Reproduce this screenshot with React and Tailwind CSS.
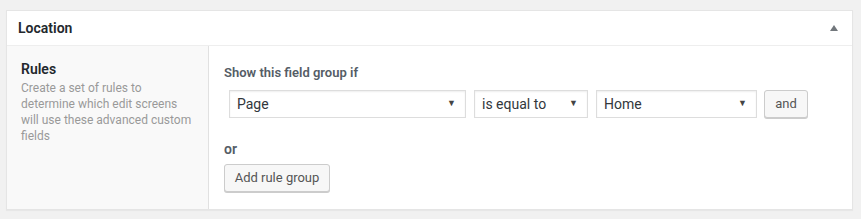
import React from 'react';

function FakeSelect({ value, width }) {
  return (
    <div
      className={`flex h-[28px] items-center justify-between border border-[#dddddd] bg-white pl-[7px] pr-[9px] text-[14px] text-[#32373c] shadow-[inset_0_1px_2px_rgba(0,0,0,0.07)] ${width}`}
    >
      <span>{value}</span>
      <span className="text-[9px] text-[#444]">▼</span>
    </div>
  );
}

function Button({ children, className = '' }) {
  return (
    <button
      className={`flex h-[28px] items-center justify-center rounded-[3px] border border-[#cccccc] bg-[#f7f7f7] text-[13px] text-[#555555] shadow-[0_1px_0_#cccccc] ${className}`}
    >
      {children}
    </button>
  );
}

export default function App() {
  return (
    <div className="h-[219px] w-[861px] bg-[#f1f1f1] pl-[6px] pt-[10px] font-['Roboto',sans-serif]">
      <div className="w-[847px] border border-[#e5e5e5] bg-white shadow-[0_1px_1px_rgba(0,0,0,0.04)]">
        <div className="flex h-[35px] items-center justify-between border-b border-[#eeeeee] pl-[11px] pr-[14px]">
          <h2 className="text-[14px] font-semibold text-[#23282d]">Location</h2>
          <svg width="8" height="6" viewBox="0 0 8 6">
            <path d="M4 0 L8 6 L0 6 Z" fill="#72777c" />
          </svg>
        </div>
        <div className="flex h-[163px]">
          <div className="w-[202px] border-r border-[#e1e1e1] bg-[#f9f9f9] pl-[14px] pr-[14px] pt-[13px]">
            <p className="text-[14px] font-semibold leading-[20px] text-[#23282d]">Rules</p>
            <p className="mt-[1px] text-[12px] leading-[16px] text-[#999999]">
              Create a set of rules to determine which edit screens will use these advanced custom fields
            </p>
          </div>
          <div className="flex-1 pl-[15px] pt-[17px]">
            <p className="text-[13px] font-semibold leading-[20px] text-[#555d66]">Show this field group if</p>
            <div className="mt-[7px] flex items-center pl-[5px]">
              <FakeSelect value="Page" width="w-[237px]" />
              <div className="w-[8px]" />
              <FakeSelect value="is equal to" width="w-[114px]" />
              <div className="w-[8px]" />
              <FakeSelect value="Home" width="w-[161px]" />
              <div className="w-[7px]" />
              <Button className="h-[27px] w-[44px]">and</Button>
            </div>
            <p className="mt-[21px] text-[14px] font-semibold leading-[20px] text-[#555d66]">or</p>
            <Button className="mt-[5px] w-[106px]">Add rule group</Button>
          </div>
        </div>
      </div>
    </div>
  );
}
